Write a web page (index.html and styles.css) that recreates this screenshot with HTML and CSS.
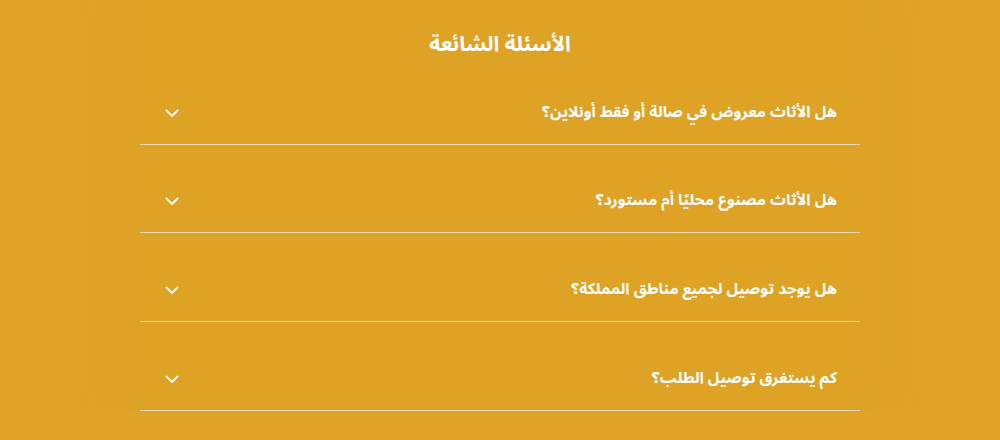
FILE: index.html
```html
<!DOCTYPE html>
<html lang="ar" dir="rtl">
<head>
    <meta charset="UTF-8">
    <meta name="viewport" content="width=device-width, initial-scale=1.0">
    <title>الأسئلة الشائعة</title>
    <link rel="stylesheet" href="styles.css">
</head>
<body>
    <section class="faq">
        <h2 class="faq-title">الأسئلة الشائعة</h2>
        <div class="faq-list">
            <div class="faq-item">
                <span class="faq-q">هل الأثاث معروض في صالة أو فقط أونلاين؟</span>
                <svg class="chev" width="14" height="8" viewBox="0 0 14 8"><path d="M1 1l6 6 6-6" fill="none" stroke="#fff" stroke-width="1.8"/></svg>
            </div>
            <div class="faq-item">
                <span class="faq-q">هل الأثاث مصنوع محليًا أم مستورد؟</span>
                <svg class="chev" width="14" height="8" viewBox="0 0 14 8"><path d="M1 1l6 6 6-6" fill="none" stroke="#fff" stroke-width="1.8"/></svg>
            </div>
            <div class="faq-item">
                <span class="faq-q">هل يوجد توصيل لجميع مناطق المملكة؟</span>
                <svg class="chev" width="14" height="8" viewBox="0 0 14 8"><path d="M1 1l6 6 6-6" fill="none" stroke="#fff" stroke-width="1.8"/></svg>
            </div>
            <div class="faq-item">
                <span class="faq-q">كم يستغرق توصيل الطلب؟</span>
                <svg class="chev" width="14" height="8" viewBox="0 0 14 8"><path d="M1 1l6 6 6-6" fill="none" stroke="#fff" stroke-width="1.8"/></svg>
            </div>
        </div>
    </section>
</body>
</html>
```

FILE: styles.css
```css
* {
    margin: 0;
    padding: 0;
    box-sizing: border-box;
}

body {
    background-color: #dfa427;
    font-family: "Noto Sans Arabic", "DejaVu Sans", sans-serif;
    color: #fff;
}

/* faq block */
.faq {
    width: 720px;
    margin: 0 auto;
    padding-top: 32px;
    box-shadow: 0 0 60px 20px rgba(150, 90, 0, 0.05);
    background-color: #dea225;
}

.faq-title {
    text-align: center;
    font-size: 21px;
    line-height: 24px;
    font-weight: bold;
}

.faq-item {
    display: flex;
    align-items: center;
    justify-content: space-between;
    padding: 44.67px 23px 19px 25px;
    border-bottom: 1px solid #ead9b3;
}

.faq-q {
    font-size: 15.6px;
    line-height: 24px;
    font-weight: bold;
}

.chev {
    display: block;
}
```
